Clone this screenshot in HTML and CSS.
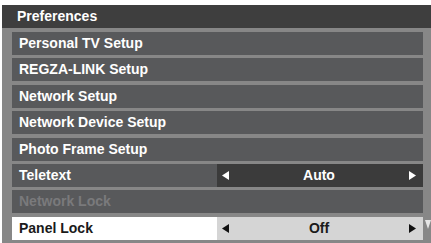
FILE: index.html
```html
<!DOCTYPE html>
<html>
<head>
<meta charset="utf-8">
<link rel="stylesheet" href="styles.css">
</head>
<body>
<div class="screen">
  <div class="header">Preferences</div>
  <div class="list">
    <div class="row"><div class="label">Personal TV Setup</div></div>
    <div class="row"><div class="label">REGZA-LINK Setup</div></div>
    <div class="row"><div class="label">Network Setup</div></div>
    <div class="row"><div class="label">Network Device Setup</div></div>
    <div class="row"><div class="label">Photo Frame Setup</div></div>
    <div class="row">
      <div class="label">Teletext</div>
      <div class="value">
        <svg class="arrow" width="7" height="9" viewBox="0 0 7 9"><polygon points="7,0 7,9 0,4.5" fill="#ffffff"/></svg>
        <span class="vtext">Auto</span>
        <svg class="arrow" width="7" height="9" viewBox="0 0 7 9"><polygon points="0,0 0,9 7,4.5" fill="#ffffff"/></svg>
      </div>
    </div>
    <div class="row"><div class="label disabled">Network Lock</div></div>
    <div class="row selected">
      <div class="label">Panel Lock</div>
      <div class="value">
        <svg class="arrow" width="7" height="9" viewBox="0 0 7 9"><polygon points="7,0 7,9 0,4.5" fill="#111111"/></svg>
        <span class="vtext">Off</span>
        <svg class="arrow" width="7" height="9" viewBox="0 0 7 9"><polygon points="0,0 0,9 7,4.5" fill="#111111"/></svg>
      </div>
    </div>
  </div>
  <svg class="scroll" width="6" height="9" viewBox="0 0 6 9"><polygon points="0,0 6,0 3,9" fill="#e6e6e6"/></svg>
</div>
</body>
</html>
```
FILE: styles.css
```css
html, body {
  margin: 0;
  padding: 0;
  background: #ffffff;
}
body {
  font-family: "Liberation Sans", Arial, sans-serif;
  font-weight: bold;
  font-size: 14px;
}
.screen {
  position: relative;
  margin: 5px 0 0 2px;
  width: 429px;
  height: 238px;
  background: #878787;
  overflow: hidden;
}
.header {
  height: 23px;
  line-height: 23px;
  background: #3e3e3e;
  color: #ffffff;
  padding-left: 15px;
}
.list {
  display: flex;
  flex-direction: column;
  gap: 3.4px;
  padding: 4px 8px 0 10px;
}
.row {
  display: flex;
  height: 23px;
  background: #58595b;
  color: #ffffff;
}
.label {
  flex: 0 0 198px;
  padding-left: 7px;
  line-height: 23px;
  white-space: nowrap;
}
.label.disabled {
  color: #7a7a7c;
}
.value {
  flex: 1;
  display: flex;
  align-items: center;
  padding: 0 7px 0 5px;
  background: #3b3b3b;
}
.vtext {
  flex: 1;
  text-align: center;
}
.arrow {
  display: block;
  flex: 0 0 auto;
}
.selected .label {
  background: #ffffff;
  color: #1a1a1a;
}
.selected .value {
  background: #d5d5d5;
  color: #1a1a1a;
}
.scroll {
  position: absolute;
  left: 423px;
  top: 215px;
}
```
